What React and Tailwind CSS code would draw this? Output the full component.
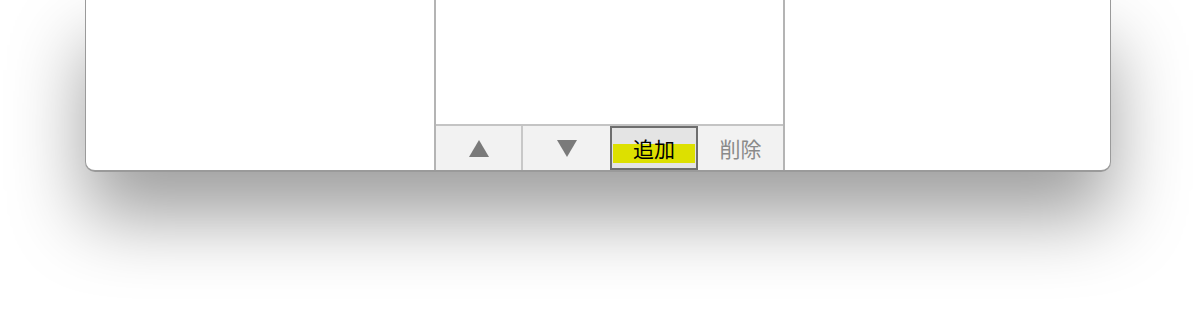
export default function App() {
  const font = { fontFamily: '"Noto Sans CJK JP", "Noto Sans", sans-serif' };

  return (
    <div className="w-[1195px] h-[312px] bg-white overflow-hidden" style={font}>
      <div className="ml-[85px] w-[1026px] h-[172px] bg-white border-x border-b-2 border-[#9a9a9a] rounded-b-[10px] shadow-[0_45px_75px_rgba(0,0,0,0.38)] flex overflow-hidden">
        <div className="w-[348px]" />
        <div className="w-[351px] flex flex-col border-x-2 border-[#b4b4b4]">
          <div className="flex-1 bg-white" />
          <div className="h-[46px] flex border-t-2 border-[#c4c4c4] bg-[#f2f2f2]">
            <button className="w-[87px] flex items-center justify-center border-r-2 border-[#c8c8c8]">
              <svg width="20" height="17" viewBox="0 0 20 17">
                <polygon points="10,0 20,17 0,17" fill="#7a7a7a" />
              </svg>
            </button>
            <button className="w-[87px] flex items-center justify-center">
              <svg width="20" height="17" viewBox="0 0 20 17">
                <polygon points="0,0 20,0 10,17" fill="#7a7a7a" />
              </svg>
            </button>
            <button className="w-[88px] relative flex items-center justify-center border-2 border-[#6e6e6e] bg-[#e4e4e4]">
              <span className="absolute left-[1px] right-[1px] top-[16px] h-[19px] bg-[#dde000]" />
              <span className="relative text-[21px] leading-none text-black">追加</span>
            </button>
            <button className="flex-1 flex items-center justify-center text-[21px] leading-none text-[#8a8a8a]">
              削除
            </button>
          </div>
        </div>
        <div className="flex-1" />
      </div>
    </div>
  );
}
